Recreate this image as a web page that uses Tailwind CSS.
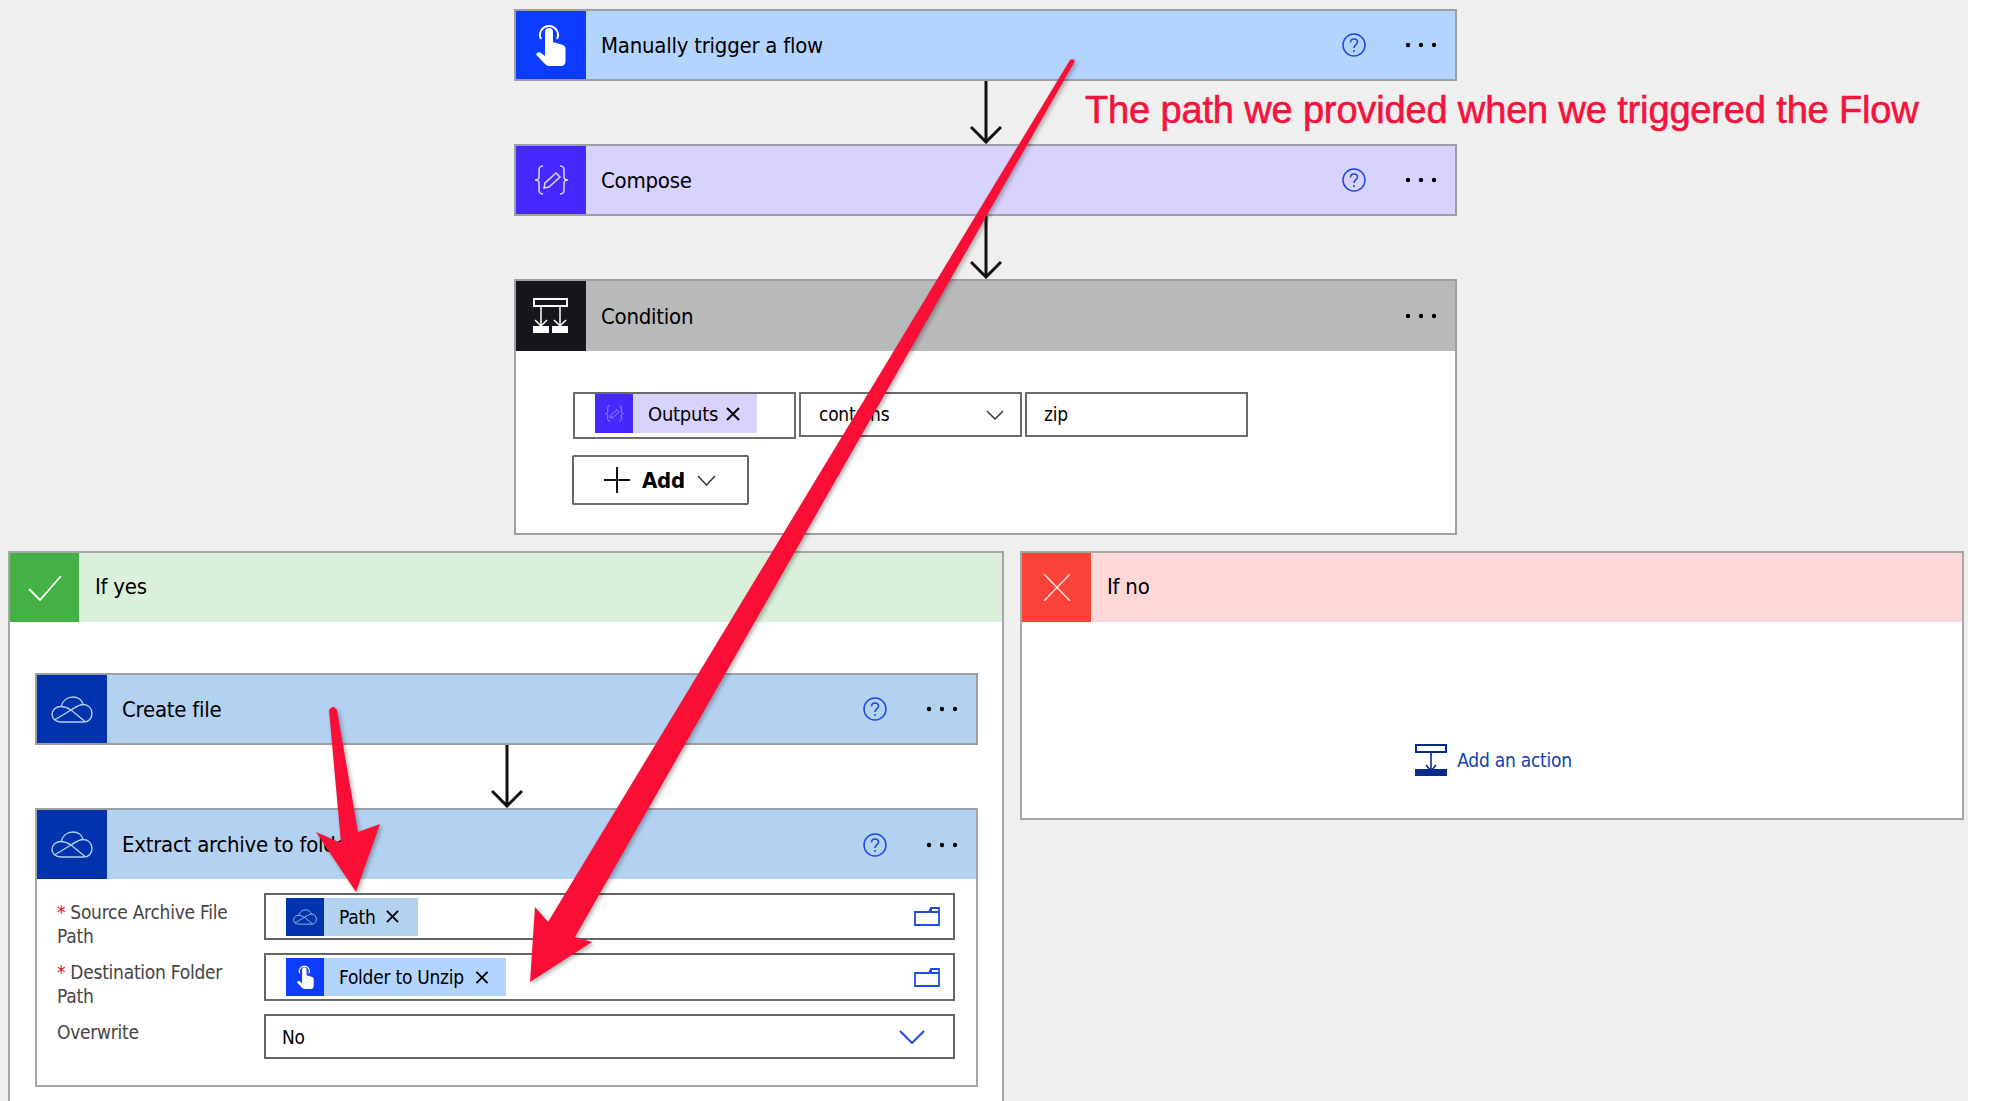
<!DOCTYPE html>
<html lang="en">
<head>
    <meta charset="UTF-8">
    <title>Flow</title>
    <script src="https://cdn.jsdelivr.net/npm/@tailwindcss/browser@4"></script>
</head>
<body class="bg-white font-['DejaVu_Sans_Condensed','Noto_Sans',sans-serif] tracking-[-0.25px] text-black">
    <svg class="hidden">
        <symbol id="touch" viewBox="0 0 30 42">
            <path d="M5 15A9 9 0 1 1 21 15" fill="none" stroke="currentColor" stroke-width="2"/>
            <path fill="currentColor" d="M9 8a4 4 0 0 1 8 0V18L27 21C29 22 29.500 23 29.500 25V37C29.500 40 28 42 25 42H13C11 42 10 41 8 39L0.500 31C-0.500 29 3 27 5 29L9 32Z"/>
        </symbol>
        <symbol id="compose" viewBox="0 0 35 30">
            <g fill="none" stroke="currentColor" stroke-width="1.500">
                <path d="M9 1C5 1 5 3 5 7V12C5 14 3 15 1 15C3 15 5 16 5 18V23C5 27 5 29 9 29"/>
                <path d="M26 1C30 1 30 3 30 7V12C30 14 32 15 34 15C32 15 30 16 30 18V23C30 27 30 29 26 29"/>
                <path d="M22 8L26 12L15 22L10 23L11 18Z"/>
            </g>
        </symbol>
        <symbol id="cloud" viewBox="0 0 42 27">
            <g fill="none" stroke="currentColor" stroke-width="1.400">
                <path d="M10 26C4 26 1 22 1 18.500C1 14 5 10.500 10 10.500C11.500 5 16 1 22 1C27 1 31 4 32 8.500C37.500 8.500 41 12.500 41 17.500C41 22 38 26 33 26Z"/>
                <path d="M10 10.500C14 10.500 17 12 20 14L34 25.500"/>
                <path d="M3.500 24L20 14C24 11.500 28 8.500 32 8.500"/>
            </g>
        </symbol>
        <symbol id="help" viewBox="0 0 24 24">
            <circle cx="12" cy="12" r="11" fill="none" stroke="currentColor" stroke-width="1.500"/>
            <path d="M8.500 9.500C8.500 7 10 6 12 6C14 6 15.500 7.200 15.500 9C15.500 11.500 12 11.800 12 15" fill="none" stroke="currentColor" stroke-width="1.500"/>
            <circle cx="12" cy="18" r="1" fill="currentColor"/>
        </symbol>
        <symbol id="dots" viewBox="0 0 32 6">
            <circle cx="3" cy="3" r="2.200" fill="currentColor"/>
            <circle cx="16" cy="3" r="2.200" fill="currentColor"/>
            <circle cx="29" cy="3" r="2.200" fill="currentColor"/>
        </symbol>
        <symbol id="down" viewBox="0 0 32 63">
            <path d="M16 0V61M1 46L16 61L31 46" fill="none" stroke="currentColor" stroke-width="3"/>
        </symbol>
        <symbol id="cross" viewBox="0 0 14 14">
            <path d="M1 1L13 13M13 1L1 13" fill="none" stroke="currentColor" stroke-width="2"/>
        </symbol>
        <symbol id="folder" viewBox="0 0 26 19">
            <path d="M1 5H15L17 1H25V18H1Z M17 1V5H25" fill="none" stroke="currentColor" stroke-width="1.800"/>
        </symbol>
    </svg>

    <div class="relative w-[1968px] h-[1101px] overflow-hidden bg-[#efefef] pt-[9px]">
        <!-- Top of the flow -->
        <div class="ml-[514px] w-[943px] flex flex-col items-center">
            <div class="w-full h-[72px] flex items-stretch bg-[#b3d4ff] border-2 border-[#9d9fa3]">
                <div class="w-[70px] flex items-center justify-center bg-[#0b3cff] text-white">
                    <svg class="w-[30px] h-[42px]"><use href="#touch"/></svg>
                </div>
                <div class="flex-1 flex items-center pl-[15px] pr-[18px] text-[22px]">
                    <span class="flex-1">Manually trigger a flow</span>
                    <svg class="w-6 h-6 mr-[39px] text-[#1f49e0]"><use href="#help"/></svg>
                    <svg class="w-8 h-[6px]"><use href="#dots"/></svg>
                </div>
            </div>
            <svg class="w-8 h-[63px] text-[#111]"><use href="#down"/></svg>
            <div class="w-full h-[72px] flex items-stretch bg-[#d8d2ff] border-2 border-[#9d9fa3]">
                <div class="w-[70px] flex items-center justify-center bg-[#4529ff] text-[#ddd8ff]">
                    <svg class="w-[35px] h-[30px]"><use href="#compose"/></svg>
                </div>
                <div class="flex-1 flex items-center pl-[15px] pr-[18px] text-[22px]">
                    <span class="flex-1">Compose</span>
                    <svg class="w-6 h-6 mr-[39px] text-[#1f49e0]"><use href="#help"/></svg>
                    <svg class="w-8 h-[6px]"><use href="#dots"/></svg>
                </div>
            </div>
            <svg class="w-8 h-[63px] text-[#111]"><use href="#down"/></svg>
            <div class="w-full h-[256px] bg-white border-2 border-t-0 border-[#9d9fa3]">
                <div class="h-[72px] flex items-stretch bg-[#b8b9ba] border-t-2 border-[#9d9fa3]">
                    <div class="w-[70px] flex items-center justify-center bg-[#14161b] text-white">
                        <svg class="w-[36px] h-[36px]" viewBox="0 0 36 36" fill="none" stroke="currentColor">
                            <rect x="1" y="1" width="33" height="7" stroke-width="2"/>
                            <path d="M8 8V28M2 22L8 28L14 22M27 8V28M21 22L27 28L33 22" stroke-width="1.500"/>
                            <rect x="0" y="28" width="16" height="7" fill="currentColor" stroke="none"/>
                            <rect x="19" y="28" width="16" height="7" fill="currentColor" stroke="none"/>
                        </svg>
                    </div>
                    <div class="flex-1 flex items-center pl-[15px] pr-[18px] text-[22px]">
                        <span class="flex-1">Condition</span>
                        <svg class="w-8 h-[6px]"><use href="#dots"/></svg>
                    </div>
                </div>
                <div class="pl-[57px] pt-[41px]">
                    <div class="flex items-start gap-[3px]">
                        <div class="w-[223px] h-[47px] pl-[20px] border-2 border-[#6b6b6b]">
                            <div class="w-[162px] h-[39px] flex items-center bg-[#d8d2ff] text-[20px]">
                                <div class="w-[38px] h-full flex items-center justify-center bg-[#4529ff] text-[#a99cff]">
                                    <svg class="w-[19px] h-[17px]"><use href="#compose"/></svg>
                                </div>
                                <span class="ml-[15px]">Outputs</span>
                                <svg class="w-[14px] h-[14px] ml-[8px]"><use href="#cross"/></svg>
                            </div>
                        </div>
                        <div class="w-[223px] h-[45px] flex items-center pl-[18px] pr-[16px] border-2 border-[#6b6b6b] text-[19px] justify-between">
                            <span>contains</span>
                            <svg class="w-[18px] h-[10px] text-[#333]" viewBox="0 0 18 10"><path d="M1 1L9 9L17 1" fill="none" stroke="currentColor" stroke-width="1.500"/></svg>
                        </div>
                        <div class="w-[223px] h-[45px] flex items-center pl-[17px] pb-px border-2 border-[#6b6b6b] text-[19px]">zip</div>
                    </div>
                    <div class="mt-4 w-[177px] h-[50px] flex items-center pl-[30px] rounded-[2px] border-2 border-[#666] -ml-px">
                        <svg class="w-[26px] h-[26px]" viewBox="0 0 26 26"><path d="M13 0V26M0 13H26" fill="none" stroke="#111" stroke-width="2"/></svg>
                        <span class="ml-[12px] text-[22px] font-bold">Add</span>
                        <svg class="ml-[12px] w-[19px] h-[11px]" viewBox="0 0 19 11"><path d="M1 1L9.500 10L18 1" fill="none" stroke="#333" stroke-width="1.500"/></svg>
                    </div>
                </div>
            </div>
        </div>

        <!-- Branches -->
        <div class="mt-[16px] ml-[8px] flex items-start gap-[16px]">
            <div class="w-[996px] h-[600px] bg-white border-2 border-[#a6a6a6]">
                <div class="h-[69px] flex items-stretch bg-[#daf0da]">
                    <div class="w-[69px] flex items-center justify-center bg-[#43b145] text-white">
                        <svg class="w-[34px] h-[26px]" viewBox="0 0 34 26"><path d="M1 14L12 25L33 1" fill="none" stroke="currentColor" stroke-width="1.800"/></svg>
                    </div>
                    <div class="flex items-center pl-[16px] pb-[2px] text-[22px]">If yes</div>
                </div>
                <div class="pl-[25px] pt-[51px]">
                    <div class="w-[943px] flex flex-col items-center">
                        <div class="w-full h-[72px] flex items-stretch bg-[#b3d1f0] border-2 border-[#9d9fa3]">
                            <div class="w-[70px] flex items-center justify-center bg-[#0033ad] text-[#b3d1f0]">
                                <svg class="w-[42px] h-[27px]"><use href="#cloud"/></svg>
                            </div>
                            <div class="flex-1 flex items-center pl-[15px] pr-[18px] text-[22px]">
                                <span class="flex-1">Create file</span>
                                <svg class="w-6 h-6 mr-[39px] text-[#1f49e0]"><use href="#help"/></svg>
                                <svg class="w-8 h-[6px]"><use href="#dots"/></svg>
                            </div>
                        </div>
                        <svg class="w-8 h-[63px] text-[#111]"><use href="#down"/></svg>
                        <div class="w-full h-[279px] bg-white border-2 border-t-0 border-[#a6a6a6]">
                            <div class="h-[71px] flex items-stretch bg-[#b3d1f0] border-t-2 border-[#9d9fa3]">
                                <div class="w-[70px] flex items-center justify-center bg-[#0033ad] text-[#b3d1f0]">
                                    <svg class="w-[42px] h-[27px]"><use href="#cloud"/></svg>
                                </div>
                                <div class="flex-1 flex items-center pl-[15px] pr-[18px] text-[22px]">
                                    <span class="flex-1">Extract archive to folder</span>
                                    <svg class="w-6 h-6 mr-[39px] text-[#1f49e0]"><use href="#help"/></svg>
                                    <svg class="w-8 h-[6px]"><use href="#dots"/></svg>
                                </div>
                            </div>
                            <div class="grid grid-cols-[207px_691px] gap-y-[13px] pl-[20px] pt-[14px] text-[19px] leading-6 text-[#444]">
                                <div class="h-[47px] pt-[7px]"><span class="text-[#e01030] mr-[5px]">*</span>Source Archive File<br>Path</div>
                                <div class="h-[47px] flex items-center justify-between pl-[20px] pr-[13px] border-2 border-[#666] text-black">
                                    <div class="w-[132px] h-[38px] flex items-center bg-[#b3d1f0]">
                                        <div class="w-[38px] h-full flex items-center justify-center bg-[#0033ad] text-[#b3d1f0]">
                                            <svg class="w-[24px] h-[16px]"><use href="#cloud"/></svg>
                                        </div>
                                        <span class="ml-[15px]">Path</span>
                                        <svg class="w-[13px] h-[13px] ml-[11px]"><use href="#cross"/></svg>
                                    </div>
                                    <svg class="w-[26px] h-[19px] text-[#1f49e0]"><use href="#folder"/></svg>
                                </div>
                                <div class="h-[48px] pt-[7px]"><span class="text-[#e01030] mr-[5px]">*</span>Destination Folder<br>Path</div>
                                <div class="h-[48px] flex items-center justify-between pl-[20px] pr-[13px] border-2 border-[#666] text-black">
                                    <div class="w-[220px] h-[38px] flex items-center bg-[#b3d4ff]">
                                        <div class="w-[38px] h-full flex items-center justify-center bg-[#0b3cff] text-white">
                                            <svg class="w-[17px] h-[24px]"><use href="#touch"/></svg>
                                        </div>
                                        <span class="ml-[15px]">Folder to Unzip</span>
                                        <svg class="w-[14px] h-[13px] ml-[11px]"><use href="#cross"/></svg>
                                    </div>
                                    <svg class="w-[26px] h-[19px] text-[#1f49e0]"><use href="#folder"/></svg>
                                </div>
                                <div class="h-[45px] pt-[6px]">Overwrite</div>
                                <div class="h-[45px] flex items-center justify-between pl-[16px] pr-[28px] border-2 border-[#666] text-black">
                                    <span>No</span>
                                    <svg class="w-[26px] h-[14px] text-[#1f49e0]" viewBox="0 0 26 14"><path d="M1 1L13 13L25 1" fill="none" stroke="currentColor" stroke-width="2"/></svg>
                                </div>
                            </div>
                        </div>
                    </div>
                </div>
            </div>

            <div class="w-[944px] h-[269px] flex flex-col bg-white border-2 border-[#a6a6a6]">
                <div class="h-[69px] flex items-stretch bg-[#fed8d6]">
                    <div class="w-[69px] flex items-center justify-center bg-[#fb433a] text-[#ffe6e4]">
                        <svg class="w-[28px] h-[27px]" viewBox="0 0 28 27"><path d="M1 0L27 27M27 0L1 27" fill="none" stroke="currentColor" stroke-width="1.400"/></svg>
                    </div>
                    <div class="flex items-center pl-[16px] pb-[2px] text-[22px]">If no</div>
                </div>
                <div class="flex-1 flex items-start justify-center pt-[122px] pl-[3px]">
                    <div class="flex items-center gap-[10px] text-[19px] text-[#0f3fae]">
                        <svg class="w-[32px] h-[32px]" viewBox="0 0 32 32">
                            <rect x="1" y="1" width="30" height="7" fill="none" stroke="#0a2a8c" stroke-width="2"/>
                            <path d="M16 8V27M11 21L16 27L21 21" fill="none" stroke="#0a2a8c" stroke-width="1.600"/>
                            <rect x="0" y="25" width="32" height="7" fill="#0a2a8c"/>
                        </svg>
                        <span>Add an action</span>
                    </div>
                </div>
            </div>
        </div>

        <!-- Annotation drawn over the screenshot -->
        <div class="absolute left-[1085px] top-[86px] text-[38px] leading-[48px] tracking-[-0.15px] whitespace-nowrap font-['Liberation_Sans',sans-serif] text-[#f5123d] [-webkit-text-stroke:0.6px_#f5123d]">The path we provided when we triggered the Flow</div>
        <svg class="absolute left-0 top-0 w-[1968px] h-[1101px] drop-shadow-[2px_2px_2px_rgba(0,0,0,0.3)]" viewBox="0 0 1968 1101" fill="#fb0e35">
            <path d="M1070 60Q1073 58 1075 61L575 937L592 942L530 982L535 907L548 922Z"/>
            <path d="M329 710Q333 704 337 710L358 832L380 824L356 892L316 832L341 843Z"/>
        </svg>
    </div>
</body>
</html>
